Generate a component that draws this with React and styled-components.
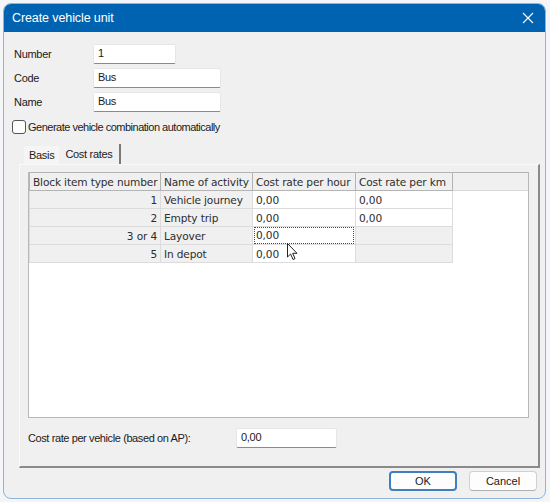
import React from 'react';
import styled, { createGlobalStyle } from 'styled-components';

const GlobalStyle = createGlobalStyle`
  html, body {
    margin: 0;
    padding: 0;
    background: #f3f5f8;
  }
  body {
    width: 550px;
    height: 502px;
    overflow: hidden;
  }
`;

const rows = [
  { num: '1', name: 'Vehicle journey', hour: '0,00', km: '0,00' },
  { num: '2', name: 'Empty trip', hour: '0,00', km: '0,00' },
  { num: '3 or 4', name: 'Layover', hour: '0,00', km: null, focus: true },
  { num: '5', name: 'In depot', hour: '0,00', km: null },
];

const CloseIcon = () => (
  <svg width="12" height="12" viewBox="0 0 12 12">
    <path d="M1 1 L11 11 M11 1 L1 11" stroke="#ffffff" strokeWidth="1.1" fill="none" />
  </svg>
);

const Cursor = () => (
  <svg width="12" height="18" viewBox="0 0 12 18">
    <path d="M0.5 0.5 L0.5 14 L3.6 11 L6 16.5 L8 15.6 L5.7 10.3 L10 10.3 Z" fill="#ffffff" stroke="#222" strokeWidth="1" strokeLinejoin="round" />
  </svg>
);

const App = () => (
  <>
    <GlobalStyle />
    <Window>
      <TitleBar>
        <Title>Create vehicle unit</Title>
        <CloseButton><CloseIcon /></CloseButton>
      </TitleBar>
      <Body>
        <Form>
          <Label>Number</Label>
          <Input width={83}>1</Input>
          <Label>Code</Label>
          <Input width={128}>Bus</Input>
          <Label>Name</Label>
          <Input width={128}>Bus</Input>
        </Form>
        <CheckRow>
          <CheckBox />
          <span>Generate vehicle combination automatically</span>
        </CheckRow>
        <Tabs>
          <Tab>Basis</Tab>
          <Tab active>Cost rates</Tab>
        </Tabs>
        <Panel>
          <GridBox>
            <Table>
              <colgroup>
                <col style={{ width: 131 }} />
                <col style={{ width: 92 }} />
                <col style={{ width: 103 }} />
                <col style={{ width: 97 }} />
                <col />
              </colgroup>
              <thead>
                <tr>
                  <Th>Block item type number</Th>
                  <Th>Name of activity</Th>
                  <Th>Cost rate per hour</Th>
                  <Th>Cost rate per km</Th>
                  <ThEmpty />
                </tr>
              </thead>
              <tbody>
                {rows.map((r) => (
                  <tr key={r.num}>
                    <Td right gray>{r.num}</Td>
                    <Td gray>{r.name}</Td>
                    <Td>{r.focus ? <Focus>{r.hour}</Focus> : r.hour}</Td>
                    <Td gray={r.km === null}>{r.km}</Td>
                    <TdEmpty />
                  </tr>
                ))}
              </tbody>
            </Table>
            <CursorSpot><Cursor /></CursorSpot>
          </GridBox>
          <VehicleRow>
            <VehicleLabel>Cost rate per vehicle (based on AP):</VehicleLabel>
            <Input width={101}>0,00</Input>
          </VehicleRow>
        </Panel>
        <Buttons>
          <Button primary>OK</Button>
          <Button>Cancel</Button>
        </Buttons>
      </Body>
    </Window>
  </>
);

export default App;

const Window = styled.div`
  margin: 3px 0 0 3px;
  width: 543px;
  height: 496px;
  box-sizing: border-box;
  border: 1px solid #8fb3da;
  border-radius: 8px;
  overflow: hidden;
  background: #f0f0f0;
  display: flex;
  flex-direction: column;
  font-family: 'Liberation Sans', Arial, sans-serif;
  font-size: 11px;
  color: #1a1a1a;
`;

const TitleBar = styled.div`
  height: 28px;
  flex: none;
  background: #0063b1;
  display: flex;
  align-items: center;
  justify-content: space-between;
  padding: 0 10px 0 8px;
`;

const Title = styled.div`
  color: #ffffff;
  font-family: 'Liberation Sans', Arial, sans-serif;
  font-size: 12.5px;
  letter-spacing: -0.1px;
`;

const CloseButton = styled.div`
  display: flex;
  align-items: center;
  padding-right: 1px;
`;

const Body = styled.div`
  flex: 1;
  display: flex;
  flex-direction: column;
  padding: 12px 0 0 10px;
`;

const Form = styled.div`
  display: grid;
  grid-template-columns: 79px auto;
  row-gap: 4px;
  align-items: center;
  justify-items: start;
`;

const Label = styled.div`
  font-size: 11px;
  letter-spacing: -0.3px;
`;

const Input = styled.div`
  width: ${(p) => p.width}px;
  height: 20px;
  box-sizing: border-box;
  background: #ffffff;
  border: 1px solid #e6e6e6;
  border-bottom: 1px solid #8a8a8a;
  border-radius: 2px;
  padding: 2px 0 0 4px;
  font-size: 11px;
  letter-spacing: -0.3px;
`;

const CheckRow = styled.div`
  display: flex;
  align-items: center;
  gap: 2px;
  margin: 8px 0 0 -2px;
  font-size: 11px;
  letter-spacing: -0.5px;
`;

const CheckBox = styled.span`
  width: 12px;
  height: 12px;
  border: 1px solid #555;
  border-radius: 3px;
  background: #fdfdfd;
`;

const Tabs = styled.div`
  display: flex;
  align-items: flex-end;
  margin: 9px 0 0 10px;
  height: 21px;
`;

const Tab = styled.div`
  height: ${(p) => (p.active ? 20 : 18)}px;
  box-sizing: border-box;
  display: flex;
  align-items: center;
  padding: 0 ${(p) => (p.active ? 6 : 5)}px;
  background: ${(p) => (p.active ? '#f0f0f0' : '#f5f5f5')};
  border-right: ${(p) => (p.active ? '2px solid #7a7a7a' : 'none')};
  font-size: 11px;
  letter-spacing: -0.3px;
  color: #222;
`;

const Panel = styled.div`
  width: 521px;
  height: 304px;
  box-sizing: border-box;
  margin-left: 5px;
  border-left: 1px solid #fafafa;
  border-top: 1px solid #fafafa;
  border-right: 2px solid #8a8a8a;
  border-bottom: 2px solid #8a8a8a;
  padding: 7px 9px 0 8px;
  display: flex;
  flex-direction: column;
`;

const GridBox = styled.div`
  position: relative;
  height: 246px;
  flex: none;
  background: #ffffff;
  border: 1px solid #b8b8b8;
  border-top: none;
  box-sizing: border-box;
`;

const Table = styled.table`
  width: 100%;
  border-collapse: collapse;
  table-layout: fixed;
  font-family: 'DejaVu Sans', Verdana, sans-serif;
  font-size: 10.6px;
  letter-spacing: -0.15px;
  color: #2e2e2e;
`;

const Th = styled.th`
  height: 17px;
  padding: 0 3px;
  background: #f0f0f0;
  border: 1px solid #b4b4b4;
  font-weight: normal;
  text-align: left;
  white-space: nowrap;
  overflow: hidden;
`;

const ThEmpty = styled.th`
  background: #f0f0f0;
  border-top: 1px solid #b4b4b4;
  border-bottom: 1px solid #d8d8d8;
`;

const Td = styled.td`
  height: 17px;
  padding: 0 3px;
  background: ${(p) => (p.gray ? '#f0f0f0' : '#ffffff')};
  border: 1px solid #dcdcdc;
  text-align: ${(p) => (p.right ? 'right' : 'left')};
  white-space: nowrap;
  overflow: hidden;
`;

const TdEmpty = styled.td`
  background: #ffffff;
`;

const Focus = styled.div`
  margin: 0 -2px;
  padding: 0 1px;
  height: 15px;
  line-height: 15px;
  border: 1px dotted #4a4a4a;
`;

const CursorSpot = styled.div`
  position: absolute;
  left: 258px;
  top: 71px;
  line-height: 0;
`;

const VehicleRow = styled.div`
  display: flex;
  align-items: center;
  margin-top: 10px;
`;

const VehicleLabel = styled.div`
  width: 208px;
  font-size: 11px;
  letter-spacing: -0.4px;
`;

const Buttons = styled.div`
  display: flex;
  justify-content: flex-end;
  align-items: center;
  gap: 12px;
  margin: 3px 8px 0 0;
`;

const Button = styled.div`
  width: 68px;
  height: 20px;
  box-sizing: border-box;
  display: flex;
  align-items: center;
  justify-content: center;
  background: #fdfdfd;
  border: ${(p) => (p.primary ? '2px solid #3f7fbf' : '1px solid #d0d0d0')};
  border-bottom-color: ${(p) => (p.primary ? '#3f7fbf' : '#b0b0b0')};
  border-radius: 4px;
  font-size: 11px;
  color: #1a1a1a;
`;
